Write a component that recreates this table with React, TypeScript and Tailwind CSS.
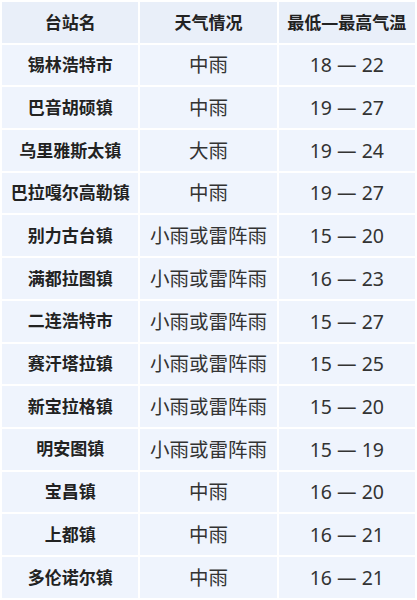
const rows: [string, string, string][] = [
  ['锡林浩特市', '中雨', '18 — 22'],
  ['巴音胡硕镇', '中雨', '19 — 27'],
  ['乌里雅斯太镇', '大雨', '19 — 24'],
  ['巴拉嘎尔高勒镇', '中雨', '19 — 27'],
  ['别力古台镇', '小雨或雷阵雨', '15 — 20'],
  ['满都拉图镇', '小雨或雷阵雨', '16 — 23'],
  ['二连浩特市', '小雨或雷阵雨', '15 — 27'],
  ['赛汗塔拉镇', '小雨或雷阵雨', '15 — 25'],
  ['新宝拉格镇', '小雨或雷阵雨', '15 — 20'],
  ['明安图镇', '小雨或雷阵雨', '15 — 19'],
  ['宝昌镇', '中雨', '16 — 20'],
  ['上都镇', '中雨', '16 — 21'],
  ['多伦诺尔镇', '中雨', '16 — 21']
];

export default function App() {
  return (
    <div className="w-[417px] h-[600px] bg-white font-['Noto_Sans','Noto_Sans_CJK_SC',sans-serif]">
      <table className="w-full table-fixed border-separate border-spacing-[2px]">
        <thead>
          <tr>
            <th className="h-[40.7px] bg-[#e9eff9] text-[17px] font-bold text-[#222]">台站名</th>
            <th className="h-[40.7px] bg-[#e9eff9] text-[17px] font-bold text-[#222]">天气情况</th>
            <th className="h-[40.7px] bg-[#e9eff9] text-[17px] font-bold text-[#222]">最低—最高气温</th>
          </tr>
        </thead>
        <tbody>
          {rows.map(([name, weather, temp]) => (
            <tr key={name}>
              <td className="h-[40.7px] bg-[#eff4fd] text-center text-[17px] font-bold text-[#222]">
                {name}
              </td>
              <td className="h-[40.7px] bg-[#eff4fd] text-center text-[19.5px] text-[#333]">{weather}</td>
              <td className="h-[40.7px] bg-[#eff4fd] text-center text-[19.5px] text-[#333]">{temp}</td>
            </tr>
          ))}
        </tbody>
      </table>
    </div>
  );
}
